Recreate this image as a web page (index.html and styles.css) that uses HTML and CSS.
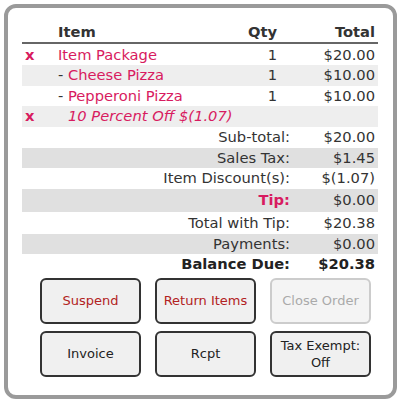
FILE: index.html
```html
<!DOCTYPE html>
<html>
<head>
<meta charset="utf-8">
<link rel="stylesheet" href="styles.css">
</head>
<body>
<div class="card">
  <table class="items">
    <thead>
      <tr>
        <th class="c-x"></th>
        <th class="c-item">Item</th>
        <th class="c-qty">Qty</th>
        <th class="c-total">Total</th>
      </tr>
    </thead>
    <tbody>
      <tr>
        <td class="c-x del">x</td>
        <td class="c-item pink">Item Package</td>
        <td class="c-qty">1</td>
        <td class="c-total">$20.00</td>
      </tr>
      <tr class="alt">
        <td class="c-x"></td>
        <td class="c-item"><span class="dash">- </span><span class="pink">Cheese Pizza</span></td>
        <td class="c-qty">1</td>
        <td class="c-total">$10.00</td>
      </tr>
      <tr>
        <td class="c-x"></td>
        <td class="c-item"><span class="dash">- </span><span class="pink">Pepperoni Pizza</span></td>
        <td class="c-qty">1</td>
        <td class="c-total">$10.00</td>
      </tr>
      <tr class="alt">
        <td class="c-x del">x</td>
        <td class="c-item pink discount" colspan="3">10 Percent Off $(1.07)</td>
      </tr>
    </tbody>
  </table>
  <table class="summary">
    <tr class="r21"><td class="lbl">Sub-total:</td><td class="val">$20.00</td></tr>
    <tr class="shade r20"><td class="lbl">Sales Tax:</td><td class="val">$1.45</td></tr>
    <tr class="r21"><td class="lbl">Item Discount(s):</td><td class="val">$(1.07)</td></tr>
    <tr class="shade r23"><td class="lbl tip">Tip:</td><td class="val">$0.00</td></tr>
    <tr class="r22"><td class="lbl">Total with Tip:</td><td class="val">$20.38</td></tr>
    <tr class="shade r20"><td class="lbl">Payments:</td><td class="val">$0.00</td></tr>
    <tr class="r21 bold"><td class="lbl">Balance Due:</td><td class="val">$20.38</td></tr>
  </table>
  <div class="buttons">
    <button class="btn red">Suspend</button>
    <button class="btn red">Return Items</button>
    <button class="btn disabled">Close Order</button>
    <button class="btn">Invoice</button>
    <button class="btn">Rcpt</button>
    <button class="btn">Tax Exempt:<br>Off</button>
  </div>
</div>
</body>
</html>
```

FILE: styles.css
```css
html, body {
  margin: 0;
  padding: 0;
  background: #ffffff;
}
body {
  font-family: "DejaVu Sans", Verdana, sans-serif;
  font-size: 14.7px;
  color: #333333;
}
.card {
  box-sizing: border-box;
  margin: 4px 3px 0 4px;
  width: 393px;
  height: 395px;
  border: 4px solid #9a9a9a;
  border-radius: 12px;
  padding: 14px 15px 0 14px;
}
table {
  border-collapse: collapse;
  width: 356px;
}
.items th {
  font-weight: bold;
  color: #333333;
  height: 19px;
  padding: 0 0 1px 0;
  border-bottom: 2px solid #666666;
  line-height: 16px;
}
.items td {
  height: 20.5px;
  padding: 0;
  line-height: 16px;
}
.items tbody tr:first-child td {
  height: 21px;
}
.c-x {
  width: 36px;
  text-align: left;
  padding-left: 3px !important;
  box-sizing: border-box;
}
.c-item {
  text-align: left;
}
.c-qty {
  width: 60px;
  text-align: right;
}
.c-total {
  width: 98px;
  text-align: right;
  padding-right: 3px !important;
}
.items th.c-qty {
  text-align: right;
}
.alt td {
  background: #eeeeee;
}
.del {
  color: #d81b60;
  font-weight: bold;
}
.pink {
  color: #d81b60;
}
.dash {
  color: #333333;
}
.discount {
  font-style: italic;
  padding-left: 10px !important;
}
.summary td {
  padding: 0;
  line-height: 16px;
  text-align: right;
}
.summary .lbl {
  padding-right: 1px;
}
.summary .val {
  width: 84px;
  padding-right: 3px;
}
.shade td {
  background: #e0e0e0;
}
.r20 td { height: 20px; }
.r21 td { height: 21px; }
.r22 td { height: 22px; }
.r23 td { height: 23px; }
.tip {
  color: #d81b60;
  font-weight: bold;
}
.bold td {
  font-weight: bold;
  color: #222222;
}
.buttons {
  display: grid;
  grid-template-columns: repeat(3, 101px);
  grid-auto-rows: 46px;
  column-gap: 14px;
  row-gap: 7px;
  margin: 3px 0 0 18px;
}
.btn {
  box-sizing: border-box;
  font-family: "DejaVu Sans", Verdana, sans-serif;
  font-size: 13px;
  line-height: 17px;
  color: #222222;
  background: #f0f0f0;
  border: 2px solid #333333;
  border-radius: 6px;
  padding: 0;
  margin: 0;
}
.btn.red {
  color: #b22222;
}
.btn.disabled {
  color: #aaaaaa;
  border-color: #cccccc;
  background: #f4f4f4;
}
```
